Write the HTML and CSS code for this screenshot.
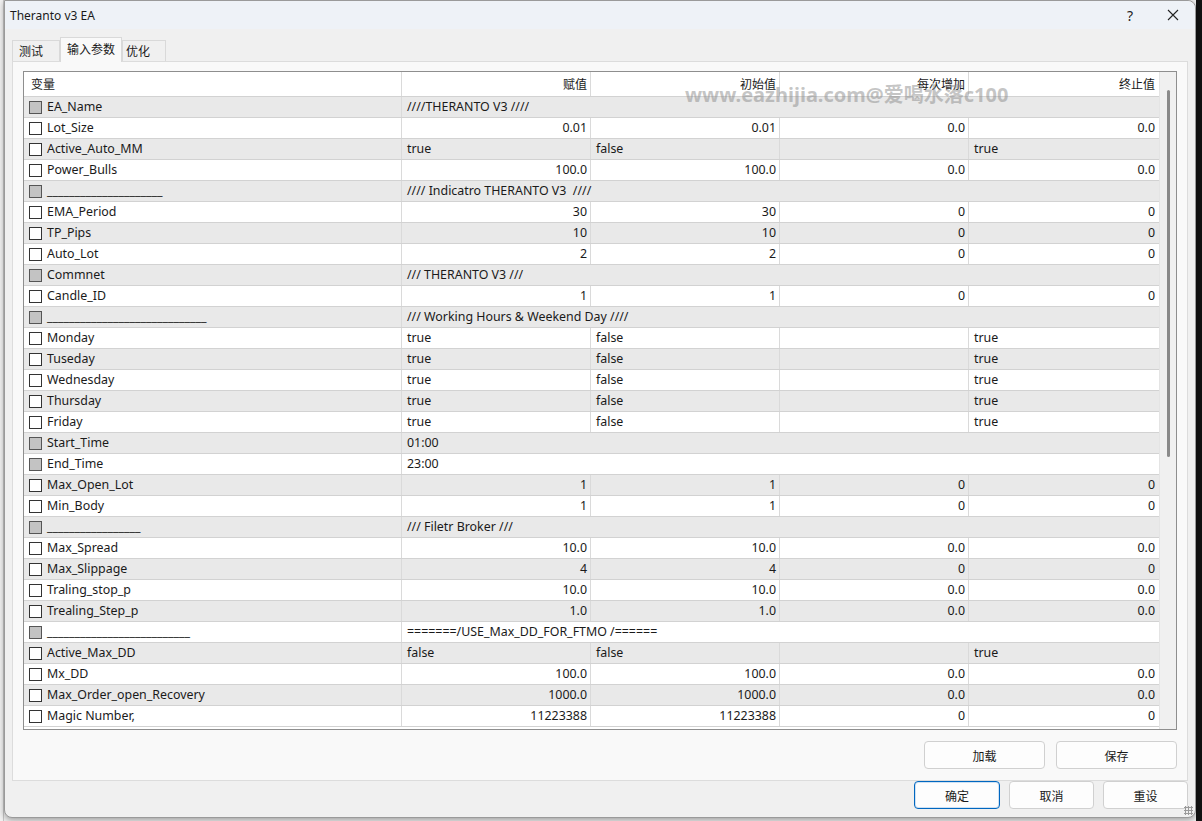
FILE: index.html
```html
<!DOCTYPE html>
<html lang="zh-CN">
<head>
    <meta charset="UTF-8">
    <title>Theranto v3 EA</title>
    <link rel="stylesheet" href="styles.css">
</head>
<body>
    <div class="backdrop-left"></div>

    <div class="dialog">
        <div class="titlebar">
            <span class="title">Theranto v3 EA</span>
            <span class="help">?</span>
            <span class="close">
                <svg width="12" height="12" viewBox="0 0 12 12"><path d="M1 1L11 11M11 1L1 11" stroke="#222" stroke-width="1.1" fill="none"/></svg>
            </span>
        </div>

        <div class="tabs">
            <div class="tab">测试</div>
            <div class="tab active">输入参数</div>
            <div class="tab">优化</div>
        </div>

        <div class="tab-panel">
            <div class="listbox">
                <div class="grid">
                    <div class="row head">
                        <div class="cell name">变量</div>
                        <div class="cell num">赋值</div>
                        <div class="cell num">初始值</div>
                        <div class="cell num">每次增加</div>
                        <div class="cell num">终止值</div>
                    </div>
                    <div id="rows"></div>
                </div>
                <div class="scrollbar"><div class="thumb"></div></div>
            </div>

            <div class="panel-buttons">
                <button class="btn wide">加载</button>
                <button class="btn wide">保存</button>
            </div>
        </div>

        <div class="footer">
            <button class="btn default">确定</button>
            <button class="btn">取消</button>
            <button class="btn">重设</button>
        </div>

        <div class="watermark">www.eazhijia.com@爱喝水落c100</div>
        <div class="grip"></div>
    </div>

    <div class="backdrop-right"></div>

    <script>
        // s = string (spans all value columns), n = numeric, b = bool
        const params = [
            ['s', 'EA_Name', '////THERANTO V3 ////'],
            ['n', 'Lot_Size', '0.01', '0.01', '0.0', '0.0'],
            ['b', 'Active_Auto_MM', 'true', 'false', '', 'true'],
            ['n', 'Power_Bulls', '100.0', '100.0', '0.0', '0.0'],
            ['s', '_____________________', '//// Indicatro THERANTO V3&nbsp; ////'],
            ['n', 'EMA_Period', '30', '30', '0', '0'],
            ['n', 'TP_Pips', '10', '10', '0', '0'],
            ['n', 'Auto_Lot', '2', '2', '0', '0'],
            ['s', 'Commnet', '/// THERANTO V3 ///'],
            ['n', 'Candle_ID', '1', '1', '0', '0'],
            ['s', '_____________________________', '/// Working Hours &amp; Weekend Day ////'],
            ['b', 'Monday', 'true', 'false', '', 'true'],
            ['b', 'Tuseday', 'true', 'false', '', 'true'],
            ['b', 'Wednesday', 'true', 'false', '', 'true'],
            ['b', 'Thursday', 'true', 'false', '', 'true'],
            ['b', 'Friday', 'true', 'false', '', 'true'],
            ['s', 'Start_Time', '01:00'],
            ['s', 'End_Time', '23:00'],
            ['n', 'Max_Open_Lot', '1', '1', '0', '0'],
            ['n', 'Min_Body', '1', '1', '0', '0'],
            ['s', '_________________', '/// Filetr Broker ///'],
            ['n', 'Max_Spread', '10.0', '10.0', '0.0', '0.0'],
            ['n', 'Max_Slippage', '4', '4', '0', '0'],
            ['n', 'Traling_stop_p', '10.0', '10.0', '0.0', '0.0'],
            ['n', 'Trealing_Step_p', '1.0', '1.0', '0.0', '0.0'],
            ['s', '__________________________', '=======/USE_Max_DD_FOR_FTMO /======'],
            ['b', 'Active_Max_DD', 'false', 'false', '', 'true'],
            ['n', 'Mx_DD', '100.0', '100.0', '0.0', '0.0'],
            ['n', 'Max_Order_open_Recovery', '1000.0', '1000.0', '0.0', '0.0'],
            ['n', 'Magic Number,', '11223388', '11223388', '0', '0']
        ];

        const rows = params.map(function (p, i) {
            const type = p[0];
            const stripe = i % 2 === 0 ? ' odd' : '';
            let html = '<div class="row' + stripe + '">';
            html += '<div class="cell name"><span class="check' + (type === 's' ? ' fixed' : '') + '"></span>' + p[1] + '</div>';
            if (type === 's') {
                html += '<div class="cell span">' + p[2] + '</div>';
            } else {
                const align = type === 'n' ? ' num' : '';
                for (let c = 2; c < 6; c++) {
                    html += '<div class="cell' + align + '">' + p[c] + '</div>';
                }
            }
            return html + '</div>';
        });
        document.getElementById('rows').innerHTML = rows.join('');
    </script>
</body>
</html>
```

FILE: styles.css
```css
* {
    box-sizing: border-box;
}
body {
    margin: 0;
    width: 1202px;
    height: 821px;
    display: flex;
    overflow: hidden;
    background: #f0f0f0;
    font-family: "Noto Sans", "Noto Sans CJK SC", sans-serif;
    font-size: 12.4px;
    color: #1a1a1a;
}
.backdrop-left {
    width: 4px;
    background: #f2f2f2;
    border-right: 1px solid #c8c8c8;
}
.backdrop-right {
    flex: 1;
    background: #111;
}
.dialog {
    position: relative;
    width: 1192px;
    height: 818px;
    background: #f0f0f0;
    border: 1px solid #9a9a9a;
    border-radius: 0 8px 8px 8px;
    box-shadow: 0 2px 6px rgba(0,0,0,0.35);
    display: flex;
    flex-direction: column;
}
.titlebar {
    height: 28px;
    background: #eef2f7;
    display: flex;
    align-items: center;
    padding-left: 5px;
    border-radius: 0 8px 0 0;
}
.title {
    flex: 1;
    font-size: 12px;
}
.help {
    font-size: 14px;
    margin-right: 34px;
    color: #222;
}
.close {
    display: flex;
    margin-right: 16px;
}
.tabs {
    display: flex;
    align-items: flex-end;
    height: 32px;
    padding-left: 7px;
    font-family: "Noto Sans CJK SC", sans-serif;
    font-size: 12px;
}
.tab {
    height: 22px;
    padding: 0 6px;
    line-height: 20px;
    background: #f0f0f0;
    border: 1px solid #d9d9d9;
    border-bottom: none;
    margin-bottom: -1px;
}
.tab:first-child {
    width: 48px;
}
.tab.active {
    height: 25px;
    width: 62px;
    line-height: 22px;
    background: #f9f9f9;
    position: relative;
    z-index: 1;
}
.tab:last-child {
    width: 44px;
    padding-left: 3px;
}
.tab-panel {
    margin: 0 7px 0 7px;
    height: 720px;
    background: #f9f9f9;
    border: 1px solid #dcdcdc;
    padding: 9px 10px 0 10px;
}
.listbox {
    height: 659px;
    background: #fff;
    border: 1px solid #8e8e8e;
    display: flex;
}
.grid {
    width: 1135px;
}
.row {
    display: flex;
    height: 21px;
    border-bottom: 1px solid #d2d2d2;
}
.row.odd {
    background: #e9e9e9;
}
.row.head {
    height: 25px;
    background: #fff;
    font-family: "Noto Sans CJK SC", sans-serif;
    font-size: 12px;
    align-items: center;
}
.cell {
    width: 189px;
    border-left: 1px solid #dadada;
    padding: 0 3px 0 5px;
    line-height: 20px;
    white-space: nowrap;
    overflow: hidden;
}
.cell:last-child {
    width: 190px;
}
.cell.name {
    width: 377px;
    border-left: none;
    display: flex;
    align-items: center;
    padding-left: 5px;
}
.head .cell {
    height: 24px;
    line-height: 24px;
}
.head .cell.name {
    padding-left: 7px;
}
.cell.num {
    text-align: right;
}
.cell.span {
    width: 757px;
}
.check {
    width: 13px;
    height: 13px;
    border: 1px solid #333;
    background: #fff;
    margin-right: 5px;
    flex: none;
}
.check.fixed {
    background: #c3c3c3;
    border-color: #555;
}
.scrollbar {
    width: 17px;
    background: #f0f0f0;
    border-left: 1px solid #e4e4e4;
    padding-top: 18px;
    display: flex;
    justify-content: center;
}
.thumb {
    width: 3px;
    height: 367px;
    background: #8a8a8a;
    border-radius: 2px;
}
.panel-buttons {
    display: flex;
    justify-content: flex-end;
    gap: 11px;
    margin-top: 11px;
}
.btn {
    height: 28px;
    width: 85px;
    background: #fdfdfd;
    border: 1px solid #d0d0d0;
    border-radius: 4px;
    font-family: "Noto Sans CJK SC", sans-serif;
    font-size: 12px;
    color: #1a1a1a;
    padding: 0;
}
.btn.wide {
    width: 121px;
}
.btn.default {
    width: 86px;
    border-color: #0067c0;
    box-shadow: inset 0 0 0 1px #cfe1f3;
}
.footer {
    display: flex;
    justify-content: flex-end;
    gap: 9px;
    padding: 0 7px 0 0;
}
.watermark {
    position: absolute;
    left: 680px;
    top: 78px;
    font-family: "Noto Sans", "Noto Sans CJK SC", sans-serif;
    font-weight: bold;
    font-size: 20px;
    color: rgba(140,140,140,0.5);
    white-space: nowrap;
}
.grip {
    position: absolute;
    right: 2px;
    bottom: 2px;
    width: 9px;
    height: 9px;
    background: radial-gradient(circle, #9a9a9a 1px, transparent 1.2px) 0 0 / 3px 3px;
}
```
